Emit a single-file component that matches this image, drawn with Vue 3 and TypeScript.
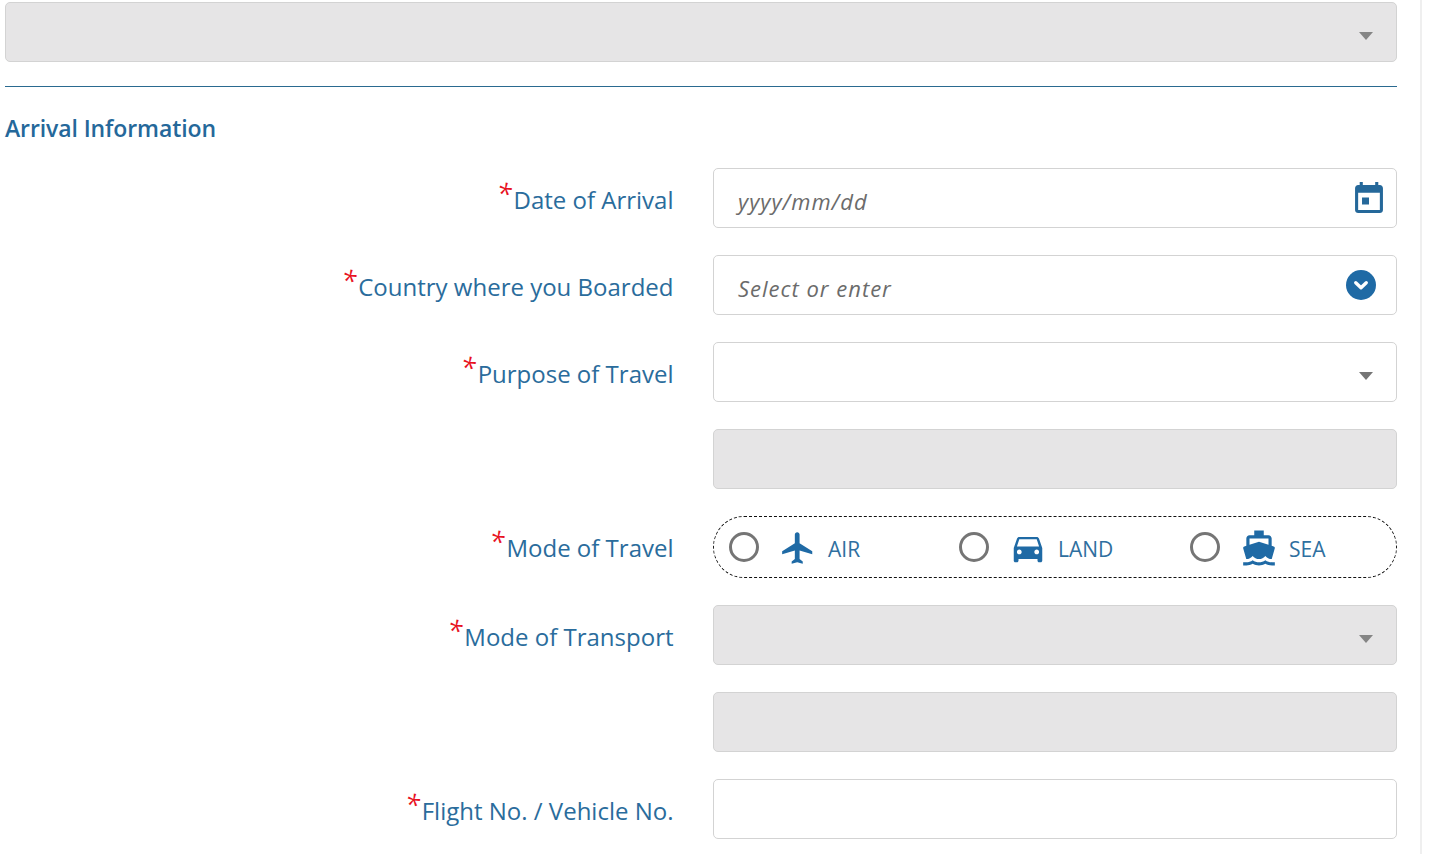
<script setup lang="ts">
interface Mode { id: string; label: string; path: string; width: string }
const modes: Mode[] = [
  { id: 'air', label: 'AIR', width: '230px', path: 'M21 16v-2l-8-5V3.5c0-.83-.67-1.5-1.5-1.5S10 2.67 10 3.5V9l-8 5v2l8-2.5V19l-2 1.5V22l3.5-1 3.5 1v-1.5L13 19v-5.5l8 2.5z' },
  { id: 'land', label: 'LAND', width: '231px', path: 'M18.92 6.01C18.72 5.42 18.16 5 17.5 5h-11c-.66 0-1.21.42-1.42 1.01L3 12v8c0 .55.45 1 1 1h1c.55 0 1-.45 1-1v-1h12v1c0 .55.45 1 1 1h1c.55 0 1-.45 1-1v-8l-2.08-5.99zM6.5 16c-.83 0-1.5-.67-1.5-1.5S5.67 13 6.5 13s1.5.67 1.5 1.5S7.33 16 6.5 16zm11 0c-.83 0-1.5-.67-1.5-1.5s.67-1.5 1.5-1.5 1.5.67 1.5 1.5-.67 1.5-1.5 1.5zM5 11l1.5-4.5h11L19 11H5z' },
  { id: 'sea', label: 'SEA', width: 'auto', path: 'M20 21c-1.39 0-2.78-.47-4-1.32-2.44 1.71-5.56 1.71-8 0C6.78 20.53 5.39 21 4 21H2v2h2c1.38 0 2.74-.35 4-.99 2.52 1.29 5.48 1.29 8 0 1.26.65 2.62.99 4 .99h2v-2h-2zM3.95 19H4c1.6 0 3.02-.88 4-2 .98 1.12 2.4 2 4 2s3.02-.88 4-2c.98 1.12 2.4 2 4 2h.05l1.89-6.68c.08-.26.06-.54-.06-.78s-.34-.42-.6-.5L20 10.62V6c0-1.1-.9-2-2-2h-3V1H9v3H6c-1.1 0-2 .9-2 2v4.62l-1.29.42c-.26.08-.48.26-.6.5s-.15.52-.06.78L3.95 19zM6 6h12v3.97L12 8 6 9.97V6z' }
]
</script>

<template>
  <div class="page">
    <main class="form">
      <div class="field disabled full"><span class="caret"></span></div>
      <hr class="rule" />
      <h2 class="heading">Arrival Information</h2>

      <div class="row">
        <label class="label"><i>*</i>Date of Arrival</label>
        <div class="field">
          <span class="hint">yyyy/mm/dd</span>
          <svg class="cal" viewBox="3 1 18 20" aria-hidden="true"><path d="M12 11H7.5v4.5H12V11zM16 1v2H8V1H6v2H5c-1.11 0-1.99.9-1.99 2L3 19c0 1.1.89 2 2 2h14c1.1 0 2-.9 2-2V5c0-1.1-.9-2-2-2h-1V1h-2zm3 18H5V8h14v11z" /></svg>
        </div>
      </div>

      <div class="row">
        <label class="label"><i>*</i>Country where you Boarded</label>
        <div class="field">
          <span class="hint">Select or enter</span>
          <span class="chev">
            <svg viewBox="0 0 16 16" aria-hidden="true"><path d="M5.2 6.8 8 9.5l2.8-2.7" /></svg>
          </span>
        </div>
      </div>

      <div class="row">
        <label class="label"><i>*</i>Purpose of Travel</label>
        <div class="field"><span class="caret"></span></div>
      </div>

      <div class="row">
        <span class="label"></span>
        <div class="field disabled"></div>
      </div>

      <div class="row">
        <label class="label"><i>*</i>Mode of Travel</label>
        <div class="modes">
          <div v-for="m in modes" :key="m.id" class="mode" :style="{ width: m.width }">
            <span class="radio"></span>
            <svg class="mode-icon" viewBox="0 0 24 24" aria-hidden="true"><path :d="m.path" /></svg>
            <span class="mode-text">{{ m.label }}</span>
          </div>
        </div>
      </div>

      <div class="row">
        <label class="label"><i>*</i>Mode of Transport</label>
        <div class="field disabled"><span class="caret"></span></div>
      </div>

      <div class="row">
        <span class="label"></span>
        <div class="field disabled"></div>
      </div>

      <div class="row">
        <label class="label"><i>*</i>Flight No. / Vehicle No.</label>
        <div class="field"></div>
      </div>
    </main>
    <div class="edge"></div>
  </div>
</template>

<style>
html, body { margin: 0; background: #fff; overflow: hidden; }
</style>

<style scoped>
.page {
  height: 854px;
  display: flex;
  overflow: hidden;
  padding: 2px 0 0 5px;
  box-sizing: border-box;
  font-family: "Open Sans", "Noto Sans", sans-serif;
  color: #25689a;
}
.form { width: 1392px; flex: none; }
.edge {
  width: 2px;
  height: 854px;
  margin: -2px 0 0 23px;
  background: #efefef;
}
.field {
  position: relative;
  flex: 1;
  height: 60px;
  box-sizing: border-box;
  border: 1px solid #d3d3d3;
  border-radius: 5px;
  background: #fff;
}
.disabled { background: #e6e5e6; }
.full { width: 100%; }
.rule {
  margin: 24px 0 0;
  border: 0;
  border-top: 1px solid #2a6a90;
}
.heading {
  margin: 23px 0 22px;
  font-size: 23px;
  line-height: 36px;
  font-weight: 600;
  letter-spacing: -0.1px;
  color: #25689a;
}
.row {
  display: flex;
  align-items: flex-start;
  margin-bottom: 27px;
}
.label {
  flex: none;
  width: 668.5px;
  margin-right: 39.5px;
  padding-top: 14px;
  text-align: right;
  font-size: 24px;
  line-height: 36px;
  color: #2a6c9c;
}
.label i {
  font-style: italic;
  color: #e8121f;
  font-size: 27px;
  line-height: 20px;
  position: relative;
  top: -5px;
  margin-right: 2px;
}
.hint {
  position: absolute;
  left: 24px;
  top: 16px;
  font-size: 22px;
  line-height: 32px;
  font-style: italic;
  letter-spacing: 1px;
  color: #6b6b6b;
}
.caret {
  position: absolute;
  right: 23px;
  top: 29px;
  width: 0;
  height: 0;
  border-left: 7px solid transparent;
  border-right: 7px solid transparent;
  border-top: 8px solid #757575;
}
.disabled .caret { border-top-color: #858585; }
.cal {
  position: absolute;
  right: 13px;
  top: 13px;
  width: 28px;
  height: 31px;
  fill: #25689a;
}
.chev {
  position: absolute;
  right: 20px;
  top: 14px;
  width: 30px;
  height: 30px;
  border-radius: 50%;
  background: #1f6aa5;
}
.chev svg {
  display: block;
  width: 30px;
  height: 30px;
  fill: none;
  stroke: #fff;
  stroke-width: 1.8;
  stroke-linecap: round;
  stroke-linejoin: round;
}
.modes {
  flex: 1;
  height: 62px;
  box-sizing: border-box;
  border: 1px dashed #111;
  border-radius: 31px;
  display: flex;
  align-items: center;
  padding-left: 15px;
}
.mode { display: flex; align-items: center; flex: none; }
.radio {
  flex: none;
  width: 30px;
  height: 30px;
  box-sizing: border-box;
  border: 3px solid #757575;
  border-radius: 50%;
  background: #fff;
}
.mode-icon {
  flex: none;
  width: 38px;
  height: 38px;
  margin-left: 20px;
  margin-top: 2px;
  fill: #1f6aa5;
}
.mode-text {
  margin-left: 11px;
  margin-top: 4px;
  font-size: 21px;
  line-height: 28px;
  color: #2f6f9f;
}
</style>
